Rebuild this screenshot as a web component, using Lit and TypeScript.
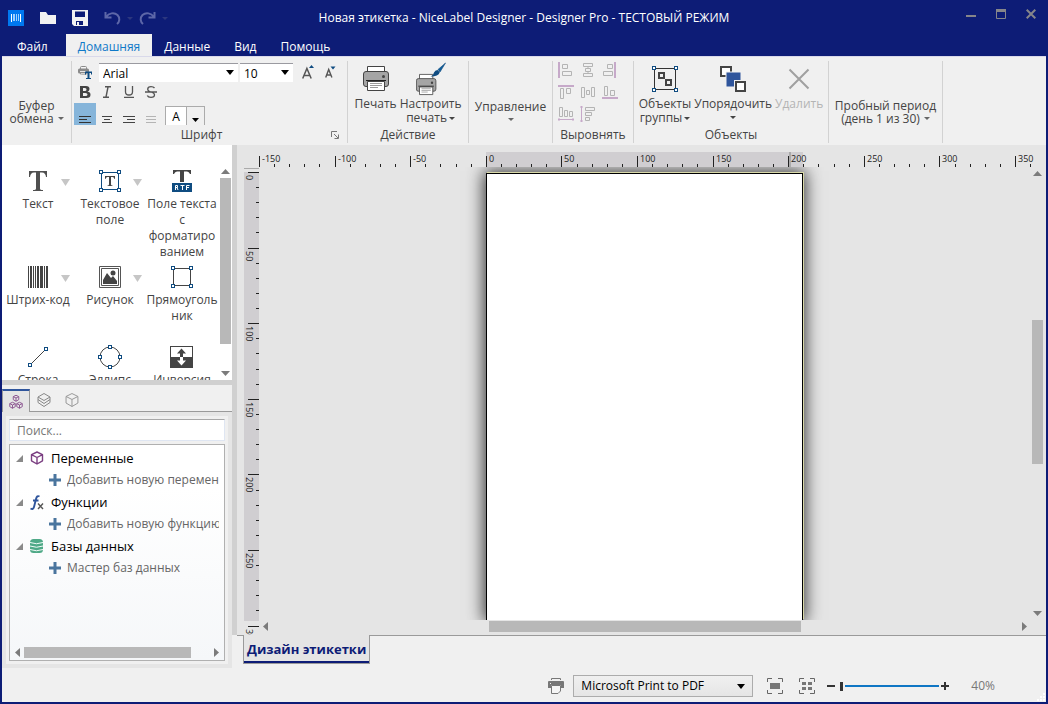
import { LitElement, html, svg, css, nothing, TemplateResult } from "lit";
import { customElement, property } from "lit/decorators.js";

/* ---------- shared ---------- */

const base = css`
  :host {
    display: block;
    font-family: "Open Sans", "Noto Sans", sans-serif;
    font-size: 12px;
    line-height: 16px;
    color: #444;
  }
  * {
    box-sizing: border-box;
  }
  button {
    font: inherit;
    color: inherit;
    background: none;
    border: 0;
    margin: 0;
    padding: 0;
    text-align: center;
  }
  svg {
    display: block;
    flex: none;
  }
`;

const icon = (w: number, h: number, body: unknown) =>
  html`<svg width=${w} height=${h} viewBox="0 0 ${w} ${h}" aria-hidden="true">${body}</svg>`;

const caret = (w = 5, h = 3, color = "#444") =>
  icon(w, h, svg`<path d="M0 0H${w}L${w / 2} ${h}Z" fill=${color} />`);

const handle = (x: number, y: number) =>
  svg`<rect x=${x + 0.5} y=${y + 0.5} width="3" height="3" fill="#fff" stroke="#0f4c81" />`;

const arrow = (dir: "up" | "down" | "left" | "right") => {
  const d = {
    up: "M0 5L4.5 0L9 5Z",
    down: "M0 0H9L4.5 5Z",
    left: "M5 0V9L0 4.5Z",
    right: "M0 0V9L5 4.5Z",
  }[dir];
  const tall = dir === "left" || dir === "right";
  return icon(tall ? 5 : 9, tall ? 9 : 5, svg`<path d=${d} fill="#7b7b7b" />`);
};

/* ---------- title bar and tabs ---------- */

@customElement("title-bar")
export class TitleBar extends LitElement {
  static styles = [
    base,
    css`
      :host {
        background: #0d1c76;
        color: #fff;
      }
      .bar {
        display: grid;
        grid-template-columns: 1fr auto 1fr;
        align-items: center;
        height: 32px;
      }
      .quick {
        display: flex;
        align-items: center;
        padding-left: 6px;
      }
      .quick button {
        margin-right: 16px;
      }
      .quick .tight,
      .quick .drop {
        margin-right: 6px;
      }
      .window {
        display: flex;
        justify-content: flex-end;
        gap: 20px;
        padding: 0 10px 8px 0;
      }
      .tabs {
        display: flex;
        height: 22px;
      }
      .tab {
        padding: 4px 12px 0;
        height: 22px;
        color: #fff;
      }
      .file {
        padding: 4px 18px 0 15px;
      }
      .active {
        background: #f0f0f0;
        color: #0f79c8;
      }
    `,
  ];

  render() {
    return html`
      <div class="bar">
        <div class="quick">
          <button aria-label="NiceLabel">
            ${icon(16, 16, svg`<rect width="16" height="16" fill="#0078f0"/><path d="M3.500 4V12M12.500 4V12" stroke="#fff"/><path d="M5 4h2v7h-2zM8 4h1v7h-1zM10 4h1v7h-1z" fill="#9fd0ff"/>`)}
          </button>
          <button aria-label="Открыть">
            ${icon(16, 12, svg`<path d="M0 0H6L8 3H16V12H0Z" fill="#f2f2f2"/>`)}
          </button>
          <button aria-label="Сохранить">
            ${icon(16, 16, svg`<path fill-rule="evenodd" d="M0 0H16V16H2L0 14ZM3 1.500V7H13V1.500ZM4 11V15H11V11Z" fill="#f2f2f2"/><rect x="5" y="12" width="2" height="3" fill="#f2f2f2"/>`)}
          </button>
          <button class="tight" aria-label="Отменить" disabled>
            ${icon(17, 14, svg`<path d="M1.500 1V6.500H7.500M2 6C5 2 10 1 13.500 4C16.500 7 15.500 11 13 13" fill="none" stroke="#5d67a8" stroke-width="2"/>`)}
          </button>
          <button class="drop" aria-label="История отмены" disabled>${caret(6, 3, "#2c377f")}</button>
          <button class="tight" aria-label="Повторить" disabled>
            ${icon(17, 14, svg`<path d="M15.500 1V6.500H9.500M15 6C12 2 7 1 3.500 4C.5 7 1.500 11 4 13" fill="none" stroke="#5d67a8" stroke-width="2"/>`)}
          </button>
          <button aria-label="История повтора" disabled>${caret(6, 3, "#2c377f")}</button>
        </div>
        <div>Новая этикетка - NiceLabel Designer - Designer Pro - ТЕСТОВЫЙ РЕЖИМ</div>
        <div class="window">
          <button aria-label="Свернуть">${icon(10, 10, svg`<path d="M0 7H10" stroke="#85858a" stroke-width="2"/>`)}</button>
          <button aria-label="Развернуть">
            ${icon(10, 10, svg`<path d="M.5 .5H9.500V9.500H.5Z" fill="none" stroke="#85858a"/><path d="M0 1.500H10" stroke="#85858a" stroke-width="3"/>`)}
          </button>
          <button aria-label="Закрыть">${icon(10, 10, svg`<path d="M.7 .7L9.300 9.300M9.300 .7L.7 9.300" stroke="#85858a" stroke-width="2"/>`)}</button>
        </div>
      </div>
      <nav class="tabs">
        <button class="tab file">Файл</button>
        <button class="tab active">Домашняя</button>
        <button class="tab">Данные</button>
        <button class="tab">Вид</button>
        <button class="tab">Помощь</button>
      </nav>
    `;
  }
}

/* ---------- ribbon ---------- */

const A = "#c6a9c9";
const G = "#b4b4b4";
const alignIcons: [string, unknown][] = [
  ["По левому краю", svg`<path d="M1 0V16" stroke=${A} stroke-width="2"/><path d="M4.500 2.500H9.500V6.500H4.500ZM4.500 9.500H13.500V13.500H4.500Z" fill="none" stroke=${G}/>`],
  ["По центру по горизонтали", svg`<path d="M3.500 1.500H12.500V4.500H3.500ZM5.500 6.500H10.500V9.500H5.500ZM3.500 11.500H12.500V14.500H3.500ZM8 4V6M8 9V11" fill="none" stroke=${G}/>`],
  ["По правому краю", svg`<path d="M13 0V16" stroke=${A} stroke-width="2"/><path d="M5.500 2.500H10.500V6.500H5.500ZM1.500 9.500H10.500V13.500H1.500Z" fill="none" stroke=${G}/>`],
  ["По верхнему краю", svg`<path d="M0 2H16" stroke=${A} stroke-width="2"/><path d="M2.500 4.500H5.500V14.500H2.500ZM8.500 4.500H12.500V9.500H8.500Z" fill="none" stroke=${G}/>`],
  ["По центру по вертикали", svg`<path d="M1.500 3.500H4.500V13.500H1.500ZM6.500 6.500H9.500V10.500H6.500ZM11.500 3.500H14.500V12.500H11.500Z" fill="none" stroke=${G}/>`],
  ["По нижнему краю", svg`<path d="M0 14H16" stroke=${A} stroke-width="2"/><path d="M2.500 2.500H5.500V11.500H2.500ZM8.500 6.500H12.500V11.500H8.500Z" fill="none" stroke=${G}/>`],
  ["Распределить по горизонтали", svg`<path d="M0 13.500H16M1 12V15M15 12V15" stroke=${A}/><path d="M1.500 1.500H4.500V10.500H1.500ZM6.500 4.500H9.500V10.500H6.500ZM11.500 5.500H14.500V10.500H11.500Z" fill="none" stroke=${G}/>`],
  ["Распределить по вертикали", svg`<path d="M1.500 0V16M0 1H3M0 15H3" stroke=${A}/><path d="M5.500 1.500H14.500V4.500H5.500ZM5.500 6.500H11.500V9.500H5.500ZM5.500 11.500H9.500V14.500H5.500Z" fill="none" stroke=${G}/>`],
];

const printerBody = svg`
  <path d="M4.500 .5H21.500V6.500H4.500Z" fill="#fff" stroke="#444"/>
  <path d="M3 5.500H23Q25.500 5.500 25.500 8V18Q25.500 20.500 23 20.500H3Q.5 20.500 .5 18V8Q.5 5.500 3 5.500Z" fill="#a5a5a5" stroke="#444"/>
  <circle cx="20.500" cy="10.500" r="1.500" fill="#444"/>
  <path d="M4.500 15.500H21.500V24.500H4.500Z" fill="#fff" stroke="#444"/>
  <path d="M3 14.500H23" stroke="#222"/>
  <path d="M7 17.500H19M7 19.500H19M7 21.500H15" stroke="#999"/>`;

@customElement("ribbon-bar")
export class RibbonBar extends LitElement {
  static styles = [
    base,
    css`
      :host {
        background: #f0f0f0;
        border-top: 1px solid #d9d9ea;
      }
      .ribbon {
        display: flex;
        height: 88px;
        padding-top: 4px;
      }
      .group {
        display: grid;
        grid-template-rows: 66px 16px;
        height: 82px;
        border-right: 1px solid #d2d2d2;
        flex: none;
      }
      .title {
        text-align: center;
      }
      .clip {
        width: 70px;
      }
      .font {
        width: 276px;
      }
      .action {
        width: 121px;
      }
      .manage {
        width: 84px;
      }
      .align {
        width: 81px;
      }
      .objects {
        width: 195px;
      }
      .trial {
        width: 114px;
      }
      .collapsed {
        display: flex;
        flex-direction: column;
        align-items: center;
        justify-content: flex-end;
        line-height: 13px;
        padding-bottom: 2px;
      }
      .row {
        display: flex;
        align-items: center;
        justify-content: center;
        gap: 4px;
      }
      .tool .row {
        gap: 2px;
      }
      .under {
        padding: 5px 0 4px;
      }
      .rows {
        display: grid;
        grid-template-rows: 20px 20px 24px;
        overflow: hidden;
        padding: 1px 0 0 2px;
      }
      .line {
        display: flex;
        align-items: center;
      }
      .combo {
        position: relative;
        display: flex;
        align-items: center;
        height: 19px;
      }
      .combo svg {
        position: absolute;
        right: 4px;
        pointer-events: none;
      }
      .combo select {
        appearance: none;
        width: 100%;
        height: 19px;
        padding: 2px 4px 0;
        border: 0;
        border-top: 1px solid #9a9aa0;
        border-radius: 0;
        background: #fff;
        font: inherit;
        color: #000;
      }
      .family {
        width: 139px;
        margin: 0 2px 0 7px;
      }
      .size {
        width: 53px;
        margin-right: 9px;
      }
      .print {
        padding-left: 4px;
      }
      .bigger {
        margin-right: 9px;
      }
      .fmt {
        width: 22px;
        height: 20px;
        display: flex;
        align-items: center;
        justify-content: center;
      }
      .just {
        width: 22px;
        height: 22px;
        display: flex;
        justify-content: center;
        padding-top: 13px;
      }
      .on {
        background: #86b5da;
      }
      .color {
        display: flex;
        align-self: end;
        margin: 0 0 1px 3px;
        border: 1px solid #ababab;
        border-bottom: 0;
        height: 19px;
      }
      .color .sample {
        width: 20px;
        line-height: 20px;
        background: #fff;
        color: #000;
      }
      .color .open {
        width: 18px;
        display: flex;
        justify-content: center;
        padding-top: 11px;
        border-left: 1px solid #ababab;
      }
      .foot {
        display: grid;
        grid-template-columns: 1fr 16px;
        align-items: center;
      }
      .big {
        display: flex;
        justify-content: center;
        gap: 3px;
      }
      .tool {
        display: flex;
        flex-direction: column;
        align-items: center;
        line-height: 14px;
      }
      .tool .pic {
        height: 36px;
        display: flex;
        align-items: center;
      }
      .off {
        color: #b4b4b4;
      }
      .grid {
        display: grid;
        grid-template-columns: repeat(3, 16px);
        grid-auto-rows: 16px;
        gap: 6px;
        padding: 1px 0 0 5px;
      }
    `,
  ];

  private lines(ws: number[], x: (w: number) => number, color: string) {
    return icon(12, 8, ws.map((w, i) => svg`<path d="M${x(w)} ${i * 3 + 0.5}h${w}" stroke=${color}/>`));
  }

  render() {
    return html`
      <div class="ribbon">
        <section class="group clip">
          <button class="collapsed">Буфер<span class="row">обмена ${caret(6, 3, "#666")}</span></button>
        </section>

        <section class="group font">
          <div class="rows">
            <div class="line">
              <button class="print" aria-label="Шрифт принтера">
                ${icon(14, 14, svg`<rect x="2.500" y="1.500" width="6" height="8" rx="1" fill="#f4f4f4" stroke="#8a8a8a"/><rect y="3.500" width="11" height="5" rx="1.500" fill="#8a8a8a"/><path d="M2 6.500H8M3 9H7" stroke="#e6e6e6"/><path d="M7 6.500h7v3h-1v-1.500h-1.500v5h1.500v1h-5v-1h1.500v-5h-1.500v1.500h-1z" fill="#0f4c81"/>`)}
              </button>
              <div class="combo family">
                <select aria-label="Шрифт"><option>Arial</option></select>${caret(8, 5, "#000")}
              </div>
              <div class="combo size">
                <select aria-label="Размер шрифта"><option>10</option></select>${caret(8, 5, "#000")}
              </div>
              <button class="bigger" aria-label="Увеличить шрифт">
                ${icon(14, 14, svg`<path d="M.7 13.500L4.900 3.500L9.200 13.500M2 10.500H8" fill="none" stroke="#555" stroke-width="1.500"/><path d="M7 3L9.500 0L12 3Z" fill="#0f4c81"/>`)}
              </button>
              <button aria-label="Уменьшить шрифт">
                ${icon(12, 14, svg`<path d="M.7 12.500L3.700 4.500L6.900 12.500M2 10H6" fill="none" stroke="#555" stroke-width="1.400"/><path d="M5.500 1.500H10.500L8 4.500Z" fill="#0f4c81"/>`)}
              </button>
            </div>
            <div class="line">
              <button class="fmt" aria-label="Полужирный">
                ${icon(12, 12, svg`<path fill-rule="evenodd" d="M1 0H7Q10.500 0 10.500 3Q10.500 5 8.500 5.500Q11.500 6 11.500 8.700Q11.500 12 7.500 12H1ZM4 2V5H6Q7.500 5 7.500 3.500Q7.500 2 6 2ZM4 7V10H6.500Q8.500 10 8.500 8.500Q8.500 7 6.500 7Z" fill="#444"/>`)}
              </button>
              <button class="fmt" aria-label="Курсив">
                ${icon(10, 12, svg`<path d="M3 .7H9M1 11.300H7M6 1L4 11" stroke="#555" stroke-width="1.400"/>`)}
              </button>
              <button class="fmt" aria-label="Подчеркнутый">
                ${icon(12, 12, svg`<path d="M2.500 0V6Q2.500 9 6 9Q9.500 9 9.500 6V0M1 11.500H11" fill="none" stroke="#555" stroke-width="1.300"/>`)}
              </button>
              <button class="fmt" aria-label="Зачеркнутый">
                ${icon(12, 12, svg`<path d="M9.500 2Q8.500 .7 6 .7Q2.700 .7 2.700 3.300Q2.700 5 6 6Q9.500 7 9.500 8.700Q9.500 11.300 6 11.300Q3 11.300 2.300 9.500M0 6H12" fill="none" stroke="#555" stroke-width="1.300"/>`)}
              </button>
            </div>
            <div class="line">
              <button class="just on" aria-label="Влево">${this.lines([12, 8, 12], () => 0, "#333")}</button>
              <button class="just" aria-label="По центру">${this.lines([10, 6, 10], (w) => 6 - w / 2, "#444")}</button>
              <button class="just" aria-label="Вправо">${this.lines([12, 8, 12], (w) => 12 - w, "#444")}</button>
              <button class="just" aria-label="По ширине" disabled>${this.lines([10, 10, 10], () => 1, G)}</button>
              <div class="color">
                <button class="sample" aria-label="Цвет шрифта">A</button>
                <button class="open" aria-label="Выбрать цвет">${caret(7, 4, "#000")}</button>
              </div>
            </div>
          </div>
          <div class="foot">
            <span class="title">Шрифт</span>
            <button aria-label="Параметры шрифта">
              ${icon(8, 8, svg`<path d="M.5 6V.5H6M3 3L7 7M7.500 3.500V7.500H3.500" fill="none" stroke="#777"/>`)}
            </button>
          </div>
        </section>

        <section class="group action">
          <div class="big">
            <button class="tool">
              <span class="pic">${icon(26, 26, printerBody)}</span>Печать
            </button>
            <button class="tool">
              <span class="pic">
                ${icon(30, 34, svg`<g transform="translate(0 12) scale(.78 .84)">${printerBody}</g><path d="M29.500 1L22 7.500L24 10Z" fill="#0f5c97" stroke="#0f4c81" stroke-width=".6"/><path d="M21.500 8L23.800 10.200Q22.500 14.500 14.500 14.500Q18 12.500 18 10.500Q19 8 21.500 8Z" fill="#0f4c81"/>`)}
              </span>
              Настроить<span class="row">печать${caret(6, 3)}</span>
            </button>
          </div>
          <div class="title">Действие</div>
        </section>

        <section class="group manage">
          <button class="collapsed"><span>Управление</span><span class="under">${caret(6, 3, "#666")}</span></button>
        </section>

        <section class="group align">
          <div class="grid">
            ${alignIcons.map(([name, body]) => html`<button aria-label=${name} disabled>${icon(16, 16, body)}</button>`)}
          </div>
          <div class="title">Выровнять</div>
        </section>

        <section class="group objects">
          <div class="big">
            <button class="tool">
              <span class="pic">
                ${icon(26, 26, svg`<path d="M2.500 2.500H23.500V23.500H2.500Z" fill="none" stroke="#333"/><path d="M7 7h5v5h-5zM14 14h5v5h-5z" fill="none" stroke="#444" stroke-width="2"/>${handle(0, 0)}${handle(22, 0)}${handle(0, 22)}${handle(22, 22)}`)}
              </span>
              Объекты<span class="row">группы${caret(6, 3)}</span>
            </button>
            <button class="tool">
              <span class="pic">
                ${icon(26, 26, svg`<path d="M1 1H11V10H1Z" fill="#fff" stroke="#444" stroke-width="2"/><path d="M6 6H21V21H6Z" fill="#2f559c" stroke="#f0f0f0" stroke-width="1"/><path d="M14 14H26V26H14Z" fill="#f0f0f0"/><path d="M16 16H25V25H16Z" fill="#fff" stroke="#444" stroke-width="2"/>`)}
              </span>
              Упорядочить<span class="under">${caret(6, 3)}</span>
            </button>
            <button class="tool off" disabled>
              <span class="pic">${icon(22, 22, svg`<path d="M1.500 1.500L20.500 20.500M20.500 1.500L1.500 20.500" stroke="#a0a0a0" stroke-width="2"/>`)}</span>Удалить
            </button>
          </div>
          <div class="title">Объекты</div>
        </section>

        <section class="group trial">
          <button class="collapsed">Пробный период<span class="row">(день 1 из 30) ${caret(6, 3, "#666")}</span></button>
        </section>
      </div>
    `;
  }
}

/* ---------- scrollbars ---------- */

@customElement("scroll-bar")
export class ScrollBar extends LitElement {
  @property({ type: Boolean, reflect: true }) horizontal = false;
  @property({ type: Number }) before = 0;
  @property({ type: Number }) size = 1;
  @property({ type: Number }) after = 0;

  static styles = [
    base,
    css`
      :host {
        display: flex;
        flex-direction: column;
        align-items: center;
        width: 11px;
      }
      :host([horizontal]) {
        flex-direction: row;
        width: auto;
        height: 11px;
      }
      .track {
        flex: 1;
        align-self: stretch;
        display: flex;
        flex-direction: inherit;
        margin: 4px 0;
      }
      :host([horizontal]) .track {
        margin: 0 4px;
      }
      .thumb {
        background: #b8b8b8;
      }
    `,
  ];

  render() {
    return html`
      ${arrow(this.horizontal ? "left" : "up")}
      <div class="track">
        <div style="flex:${this.before}"></div>
        <div class="thumb" style="flex:${this.size}"></div>
        <div style="flex:${this.after}"></div>
      </div>
      ${arrow(this.horizontal ? "right" : "down")}
    `;
  }
}

/* ---------- toolbox ---------- */

const tools: { lines: string[]; menu?: boolean; art: TemplateResult }[] = [
  {
    lines: ["Текст"],
    menu: true,
    art: icon(24, 24, svg`<path d="M3 2H21V8H20Q19.500 3.500 16 3.500H14V19.500Q14 21 17 21V22H7V21Q10 21 10 19.500V3.500H8Q4.500 3.500 4 8H3Z" fill="#505050"/>`),
  },
  {
    lines: ["Текстовое", "поле"],
    menu: true,
    art: icon(22, 22, svg`<path d="M2.500 2.500H19.500V19.500H2.500Z" fill="none" stroke="#0f4c81"/><path d="M6 6H16V9H15.500Q15 7 13.500 7H12V14.500Q12 15.500 13.500 15.500V16H8.500V15.500Q10 15.500 10 14.500V7H8.500Q7 7 6.500 9H6Z" fill="#444"/>${handle(0, 0)}${handle(18, 0)}${handle(0, 18)}${handle(18, 18)}`),
  },
  {
    lines: ["Поле текста", "с", "форматиро", "ванием"],
    art: icon(20, 22, svg`<path d="M1 0H19V4H18Q17 1.500 15 1.500H12V12H8V1.500H5Q3 1.500 2 4H1Z" fill="#444"/><rect y="13" width="20" height="9" fill="#0f4c81"/><path d="M3.500 20V15.500H5.500V17.500H3.500M5 17.500L6 20M8.500 15.500H12.500M10.500 15.500V20M14.500 20V15.500H17.500M14.500 17.500H17" fill="none" stroke="#fff"/>`),
  },
  {
    lines: ["Штрих-код"],
    menu: true,
    art: icon(20, 22, svg`<path d="M0 0h1v22H0zM2 0h2v22H2zM5 0h1v22H5zM7 0h1v22H7zM9 0h2v22H9zM12 0h3v22h-3zM16 0h1v22h-1zM18 0h2v22h-2z" fill="#444"/>`),
  },
  {
    lines: ["Рисунок"],
    menu: true,
    art: icon(22, 22, svg`<path d="M.5 .5H21.500V21.500H.5ZM2.500 2.500H19.500V19.500H2.500Z" fill="none" stroke="#555"/><path d="M4 18V14L8 7L12 12L14 10L18 15V18Z" fill="#444"/><circle cx="14" cy="7" r="2.500" fill="#444"/>`),
  },
  {
    lines: ["Прямоуголь", "ник"],
    art: icon(22, 22, svg`<path d="M2.500 2.500H19.500V19.500H2.500Z" fill="none" stroke="#444"/>${handle(0, 0)}${handle(18, 0)}${handle(0, 18)}${handle(18, 18)}`),
  },
  {
    lines: ["Строка"],
    art: icon(20, 20, svg`<path d="M2 18L18 2" stroke="#444"/>${handle(0, 16)}${handle(16, 0)}`),
  },
  {
    lines: ["Эллипс"],
    art: icon(24, 24, svg`<circle cx="12" cy="12" r="10" fill="none" stroke="#444"/>${handle(10, 0)}${handle(10, 20)}${handle(0, 10)}${handle(20, 10)}`),
  },
  {
    lines: ["Инверсия"],
    art: icon(24, 22, svg`<rect x=".5" y=".5" width="22" height="21" fill="#fff" stroke="#444"/><rect y="11" width="23" height="11" fill="#444"/><path d="M11.500 2.500L16 7.500H13V11H10V7.500H7Z" fill="#444"/><path d="M11.500 19.500L16 14.500H13V11H10V14.500H7Z" fill="#fff"/>`),
  },
];

@customElement("tool-box")
export class ToolBox extends LitElement {
  static styles = [
    base,
    css`
      :host {
        display: flex;
        background: #fff;
        overflow: hidden;
        padding-top: 22px;
      }
      .grid {
        flex: 1;
        display: grid;
        grid-template-columns: repeat(3, 72px);
        grid-template-rows: 96px 80px 96px;
        height: 0;
      }
      .tool {
        position: relative;
        display: flex;
        flex-direction: column;
        align-items: center;
      }
      .art {
        height: 28px;
        margin-bottom: 1px;
        display: flex;
        align-items: center;
      }
      .menu {
        position: absolute;
        right: 4px;
        top: 12px;
      }
      scroll-bar {
        margin: 2px 1px 4px;
      }
    `,
  ];

  render() {
    return html`
      <div class="grid">
        ${tools.map(
          (t) => html`<button class="tool">
            <span class="art">${t.art}</span>
            ${t.menu ? html`<span class="menu">${caret(9, 7, "#c6c6c6")}</span>` : nothing}
            ${t.lines.map((l) => html`<span>${l}</span>`)}
          </button>`
        )}
      </div>
      <scroll-bar .size=${87} .after=${12}></scroll-bar>
    `;
  }
}

/* ---------- explorer ---------- */

const cube = (x: number, y: number, s: number, c: string, w = 1) =>
  svg`<path transform="translate(${x} ${y}) scale(${s})" d="M6 .5L11.500 3.200V9.300L6 12.500L.5 9.300V3.200ZM.5 3.200L6 6L11.500 3.200M6 6V12.500" fill="none" stroke=${c} stroke-width=${w / s} stroke-linejoin="round"/>`;

@customElement("data-explorer")
export class DataExplorer extends LitElement {
  static styles = [
    base,
    css`
      :host {
        display: flex;
        flex-direction: column;
        min-width: 0;
        background: #e5e5e5;
      }
      .tabs {
        display: flex;
        background: #f0f0f0;
        height: 27px;
        padding-top: 4px;
      }
      .tab {
        width: 28px;
        display: flex;
        align-items: center;
        justify-content: center;
        border-bottom: 1px solid #9a9a9a;
      }
      .tab.on {
        background: #e5e5e5;
        border: 1px solid #9a9a9a;
        border-top: 2px solid #2f559c;
        border-bottom: 0;
      }
      .rest {
        flex: 1;
        border-bottom: 1px solid #9a9a9a;
      }
      .body {
        flex: 1;
        display: flex;
        flex-direction: column;
        gap: 3px;
        min-width: 0;
        margin: 4px;
        padding: 3px;
        background: #f0f0f0;
      }
      .search {
        height: 22px;
        width: 100%;
        border: 1px solid #dfe6f2;
        border-top: 1px solid #a8a8a8;
        background: #fff;
        font: inherit;
        padding: 0 7px;
        outline: 0;
      }
      .search::placeholder {
        color: #777;
        opacity: 1;
      }
      .tree {
        flex: 1;
        display: flex;
        flex-direction: column;
        border: 1px solid #b0b0b0;
        background: linear-gradient(#fff 20%, #f5f7f9);
        padding: 2px 0;
        overflow: hidden;
      }
      ul {
        list-style: none;
        margin: 0;
        padding: 0;
        flex: 1;
        min-width: 0;
      }
      .node,
      .leaf {
        display: flex;
        align-items: center;
        height: 22px;
        width: 100%;
        white-space: nowrap;
      }
      .node {
        gap: 7px;
        padding-left: 6px;
        font-size: 13px;
        color: #000;
      }
      .pic {
        width: 14px;
      }
      .leaf {
        padding: 0 5px 0 39px;
        gap: 6px;
        color: #666;
      }
      .leaf-text {
        overflow: hidden;
      }
      scroll-bar {
        margin: 0 5px;
      }
    `,
  ];

  render() {
    const nodes: [string, string, TemplateResult][] = [
      ["Переменные", "Добавить новую переменную", icon(14, 14, cube(1, 0.5, 1, "#7b3f82", 1.4))],
      [
        "Функции",
        "Добавить новую функцию",
        icon(14, 15, svg`<path d="M9.500 1.500Q7 0 6 4L4 12Q3.200 15 .5 13.500M3 5.500H8.500" fill="none" stroke="#2f559c" stroke-width="1.900"/><path d="M8 8.500L13 14M13 8.500L8 14" stroke="#555" stroke-width="1.400"/>`),
      ],
      [
        "Базы данных",
        "Мастер баз данных",
        icon(14, 14, svg`<rect width="13" height="14" rx="3.500" fill="#4fa987"/><path d="M0 3.500Q6.500 6 13 3.500M0 7Q6.500 9.500 13 7M0 10.500Q6.500 13 13 10.500" fill="none" stroke="#f4fbf8"/>`),
      ],
    ];
    return html`
      <div class="tabs">
        <button class="tab on" aria-label="Источники данных">
          ${icon(14, 14, svg`${cube(4, 0, 0.5, "#8f5a94")}${cube(0.5, 7, 0.5, "#8f5a94")}${cube(7.5, 7, 0.5, "#8f5a94")}`)}
        </button>
        <button class="tab" aria-label="Слои">
          ${icon(14, 14, svg`<path d="M7 .5L13 4L7 7.500L1 4ZM1 6.500L7 10.500L13 6.500M1 9.500L7 13.500L13 9.500M1 4V9.500M13 4V9.500" fill="none" stroke="#888"/>`)}
        </button>
        <button class="tab" aria-label="Объекты">${icon(14, 14, cube(0.5, 0, 1.08, "#999"))}</button>
        <div class="rest"></div>
      </div>
      <div class="body">
        <input class="search" type="text" aria-label="Поиск" placeholder="Поиск..." />
        <div class="tree">
          <ul>
            ${nodes.map(
              ([name, action, art]) => html`<li>
                <div class="node">
                  ${icon(7, 7, svg`<path d="M7 0V7H0Z" fill="#8a8a8a"/>`)}<span class="pic">${art}</span>${name}
                </div>
                <button class="leaf">
                  ${icon(12, 12, svg`<path d="M6 0V12M0 6H12" stroke="#4a759e" stroke-width="3"/>`)}<span class="leaf-text">${action}</span>
                </button>
              </li>`
            )}
          </ul>
          <scroll-bar horizontal .size=${167} .after=${19}></scroll-bar>
        </div>
      </div>
    `;
  }
}

/* ---------- design surface ---------- */

@customElement("design-surface")
export class DesignSurface extends LitElement {
  static styles = [
    base,
    css`
      :host {
        display: grid;
        grid-template-columns: 22px 1fr 15px;
        grid-template-rows: 22px 1fr 15px;
        background: #e5e5e5;
        min-height: 0;
        overflow: hidden;
      }
      .top {
        grid-column: 2 / 4;
        width: 100%;
      }
      .side {
        grid-row: 2 / 4;
        grid-column: 1;
        height: 100%;
      }
      .label {
        font-size: 9px;
        fill: #222;
      }
      .view {
        grid-row: 2;
        grid-column: 2;
        overflow: hidden;
        padding: 6px 0 0 227px;
      }
      .sheet {
        width: 317px;
        height: 100%;
        background: #fff;
        border: 1px solid #000;
        border-bottom: 0;
        box-shadow: 1px -1px 0 #d9d9a8, 0 0 16px 2px #333;
      }
      .vert {
        grid-row: 2 / 4;
        grid-column: 3;
        margin: 4px 3px 19px 1px;
      }
      .horz {
        grid-row: 3;
        grid-column: 2;
        margin: 1px 4px 3px;
      }
    `,
  ];

  private topTicks() {
    const out = [];
    for (let i = 0; i <= 51; i++) {
      const x = Math.round(i * 15.12);
      const major = i % 5 === 0;
      out.push(svg`<rect x=${x} y=${major ? 11 : 19} width="1" height=${major ? 11 : 3} fill="#222"/>`);
      if (major) out.push(svg`<text class="label" x=${x + 3} y="17">${i * 10 - 150}</text>`);
    }
    return out;
  }

  private sideTicks() {
    const out = [];
    for (let i = 0; i <= 30; i++) {
      const y = Math.round(5 + i * 15.12);
      const major = i % 5 === 0;
      out.push(svg`<rect x=${major ? 11 : 19} y=${y} width=${major ? 11 : 3} height="1" fill="#222"/>`);
      if (major) out.push(svg`<text class="label" transform="translate(9 ${y + 3}) rotate(90)">${i * 10}</text>`);
    }
    return out;
  }

  render() {
    return html`
      <svg class="top" height="22" aria-hidden="true">
        <rect x="227" y="7" width="317" height="15" fill="#d0ced1" />
        <rect x="530" y="7" width="2" height="15" fill="#aaa" />
        ${this.topTicks()}
      </svg>
      <svg class="side" width="22" aria-hidden="true">
        <rect x="7" y="5" width="15" height="449" fill="#d0ced1" />
        <rect x="7" y="1" width="15" height="1" fill="#aaa" />
        ${this.sideTicks()}
      </svg>
      <div class="view"><div class="sheet"></div></div>
      <scroll-bar class="vert" .before=${141} .size=${145} .after=${144}></scroll-bar>
      <scroll-bar class="horz" horizontal .before=${216} .size=${312} .after=${216}></scroll-bar>
    `;
  }
}

/* ---------- status bar ---------- */

@customElement("status-bar")
export class StatusBar extends LitElement {
  static styles = [
    base,
    css`
      :host {
        position: relative;
        background: #f0f0f0;
      }
      .bar {
        display: flex;
        align-items: center;
        justify-content: flex-end;
        height: 34px;
        padding: 2px 51px 0 0;
      }
      .combo {
        position: relative;
        display: flex;
        align-items: center;
        margin: 0 14px 0 9px;
      }
      .combo svg {
        position: absolute;
        right: 8px;
        pointer-events: none;
      }
      select {
        appearance: none;
        width: 180px;
        height: 22px;
        padding: 0 7px;
        border: 1px solid #acacac;
        border-radius: 0;
        background: linear-gradient(#f0f0f0, #e5e5e5);
        font: inherit;
        color: #000;
      }
      .fit {
        margin-right: 16px;
      }
      .many {
        margin-right: 12px;
      }
      .zoom {
        appearance: none;
        width: 99px;
        height: 12px;
        margin: 0 2px 0 5px;
        background: linear-gradient(#0f76c4, #0f76c4) center / 100% 2px no-repeat;
      }
      .zoom::-webkit-slider-thumb {
        appearance: none;
        width: 5px;
        height: 9px;
        background: #333;
        border-right: 2px solid #f0f0f0;
      }
      output {
        margin-left: 22px;
        color: #777;
      }
      .grip {
        position: absolute;
        right: 1px;
        bottom: 1px;
      }
    `,
  ];

  render() {
    const frame = svg`<path d="M.5 4V.5H5M11 .5H15.500V4M15.500 12V15.500H11M5 15.500H.5V12" fill="none" stroke="#666"/>`;
    return html`
      <div class="bar">
        ${icon(16, 16, svg`<path d="M3.500 2V.5H12.500V2" fill="none" stroke="#777"/><path d="M1 3H15Q16 3 16 4V10H13V7H3V10H0V4Q0 3 1 3Z" fill="#777"/><path d="M2 5.500H14" stroke="#f0f0f0" stroke-dasharray="1 11"/><path d="M3.500 7.500H12.500V13L10 15.500H3.500Z" fill="#f5f5f5" stroke="#777"/>`)}
        <div class="combo">
          <select aria-label="Принтер"><option>Microsoft Print to PDF</option></select>${caret(8, 5, "#000")}
        </div>
        <button class="fit" aria-label="По размеру этикетки">${icon(16, 16, svg`${frame}<rect x="3" y="5" width="10" height="6" fill="#777"/>`)}</button>
        <button class="many" aria-label="По размеру объектов">
          ${icon(16, 16, svg`${frame}<path d="M3 4h4v3h-4zM9 4h4v3h-4zM3 9h4v3h-4zM9 9h4v3h-4z" fill="#777"/>`)}
        </button>
        <button aria-label="Уменьшить">${icon(8, 8, svg`<path d="M0 4H8" stroke="#333" stroke-width="2"/>`)}</button>
        <input class="zoom" type="range" aria-label="Масштаб" min="0" max="100" value="0" />
        <button aria-label="Увеличить">${icon(8, 8, svg`<path d="M0 4H8M4 0V8" stroke="#333" stroke-width="2"/>`)}</button>
        <output>40%</output>
      </div>
      <span class="grip">
        ${icon(8, 8, svg`<path d="M6 0h2v2h-2zM6 3h2v2h-2zM3 3h2v2h-2zM0 6h2v2h-2zM3 6h2v2h-2zM6 6h2v2h-2z" fill="#fff"/>`)}
      </span>
    `;
  }
}

/* ---------- application ---------- */

@customElement("app-root")
export class AppRoot extends LitElement {
  static styles = [
    base,
    css`
      :host {
        display: grid;
        grid-template-rows: auto auto 1fr auto;
        height: 100vh;
        box-sizing: border-box;
        border: 2px solid #0d1c76;
        border-top: 0;
        padding-top: 2px;
        background: linear-gradient(#0d1c76 2px, #f0f0f0 2px);
        overflow: hidden;
      }
      .main {
        display: grid;
        grid-template-columns: 230px 1fr;
        min-height: 0;
      }
      .left {
        display: grid;
        grid-template-columns: minmax(0, 1fr);
        grid-template-rows: 235px 1fr;
        row-gap: 5px;
        background: #d0d0d0;
        min-height: 0;
      }
      .right {
        display: grid;
        grid-template-rows: 1fr 33px;
        min-height: 0;
      }
      .surface {
        display: grid;
        border-left: 5px solid #d0d0d0;
        min-height: 0;
      }
      .pages {
        display: flex;
        padding-left: 5px;
      }
      .lead {
        width: 6px;
        border-top: 1px solid #9a9a9a;
      }
      .page {
        height: 29px;
        padding: 0 3px;
        background: #e5e5e5;
        border: 1px solid #9a9a9a;
        border-top: 0;
        box-shadow: inset 0 -2px #0d1c76;
        color: #0d1c76;
        font-size: 13px;
        font-weight: 700;
      }
      .trail {
        flex: 1;
        border-top: 1px solid #9a9a9a;
      }
    `,
  ];

  render() {
    return html`
      <title-bar></title-bar>
      <ribbon-bar></ribbon-bar>
      <div class="main">
        <div class="left">
          <tool-box></tool-box>
          <data-explorer></data-explorer>
        </div>
        <div class="right">
          <div class="surface"><design-surface></design-surface></div>
          <div class="pages">
            <div class="lead"></div>
            <button class="page">Дизайн этикетки</button>
            <div class="trail"></div>
          </div>
        </div>
      </div>
      <status-bar></status-bar>
    `;
  }
}
